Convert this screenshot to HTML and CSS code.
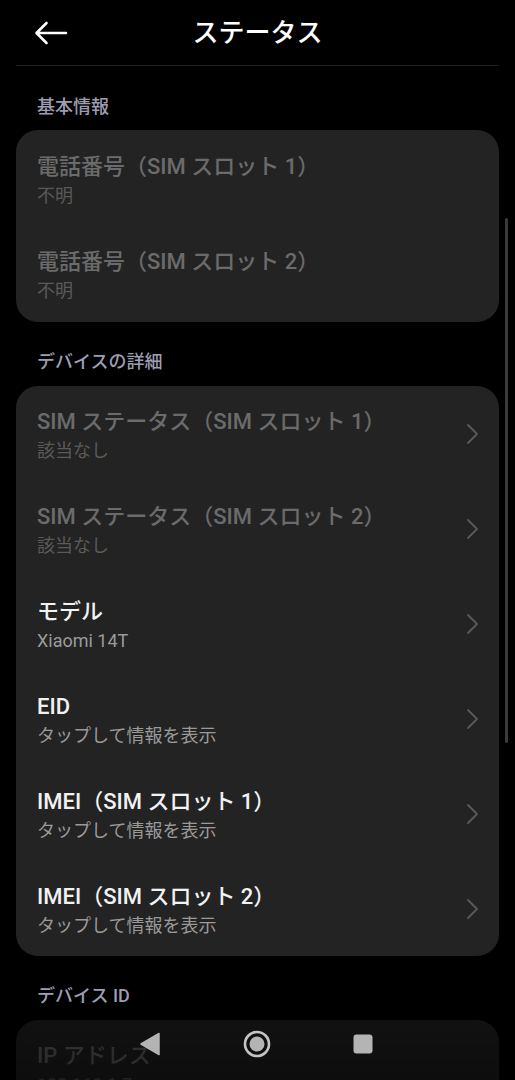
FILE: index.html
```html
<!DOCTYPE html>
<html lang="ja">
  <head>
    <meta charset="utf-8">
    <meta name="viewport" content="width=device-width">
    <title>ステータス</title>
    <link rel="stylesheet" href="styles.css">
  </head>
  <body>
    <header class="topbar">
      <div class="back">
        <svg width="34" height="24" viewBox="0 0 34 24">
          <path d="M32 12H3M12.5 2L2.5 12l10 10" fill="none" stroke="#fff" stroke-width="2.6" stroke-linecap="round" stroke-linejoin="round"/>
        </svg>
      </div>
      <h1 class="title">ステータス</h1>
      <div></div>
    </header>

    <main class="content">
      <h2 class="label">基本情報</h2>
      <section class="card card-basic">
        <div class="row disabled">
          <div class="text">
            <div class="name">電話番号（SIM スロット 1）</div>
            <div class="sub">不明</div>
          </div>
        </div>
        <div class="row disabled">
          <div class="text">
            <div class="name">電話番号（SIM スロット 2）</div>
            <div class="sub">不明</div>
          </div>
        </div>
      </section>

      <h2 class="label">デバイスの詳細</h2>
      <section class="card">
        <div class="row disabled">
          <div class="text">
            <div class="name">SIM ステータス（SIM スロット 1）</div>
            <div class="sub">該当なし</div>
          </div>
          <svg class="chev" width="14" height="22" viewBox="0 0 14 22"><path d="M3 2l9 9-9 9" fill="none" stroke="currentColor" stroke-width="1.8" stroke-linecap="round" stroke-linejoin="round"/></svg>
        </div>
        <div class="row disabled">
          <div class="text">
            <div class="name">SIM ステータス（SIM スロット 2）</div>
            <div class="sub">該当なし</div>
          </div>
          <svg class="chev" width="14" height="22" viewBox="0 0 14 22"><path d="M3 2l9 9-9 9" fill="none" stroke="currentColor" stroke-width="1.8" stroke-linecap="round" stroke-linejoin="round"/></svg>
        </div>
        <div class="row">
          <div class="text">
            <div class="name">モデル</div>
            <div class="sub">Xiaomi 14T</div>
          </div>
          <svg class="chev" width="14" height="22" viewBox="0 0 14 22"><path d="M3 2l9 9-9 9" fill="none" stroke="currentColor" stroke-width="1.8" stroke-linecap="round" stroke-linejoin="round"/></svg>
        </div>
        <div class="row">
          <div class="text">
            <div class="name">EID</div>
            <div class="sub">タップして情報を表示</div>
          </div>
          <svg class="chev" width="14" height="22" viewBox="0 0 14 22"><path d="M3 2l9 9-9 9" fill="none" stroke="currentColor" stroke-width="1.8" stroke-linecap="round" stroke-linejoin="round"/></svg>
        </div>
        <div class="row">
          <div class="text">
            <div class="name">IMEI（SIM スロット 1）</div>
            <div class="sub">タップして情報を表示</div>
          </div>
          <svg class="chev" width="14" height="22" viewBox="0 0 14 22"><path d="M3 2l9 9-9 9" fill="none" stroke="currentColor" stroke-width="1.8" stroke-linecap="round" stroke-linejoin="round"/></svg>
        </div>
        <div class="row">
          <div class="text">
            <div class="name">IMEI（SIM スロット 2）</div>
            <div class="sub">タップして情報を表示</div>
          </div>
          <svg class="chev" width="14" height="22" viewBox="0 0 14 22"><path d="M3 2l9 9-9 9" fill="none" stroke="currentColor" stroke-width="1.8" stroke-linecap="round" stroke-linejoin="round"/></svg>
        </div>
      </section>

      <h2 class="label">デバイス ID</h2>
      <section class="card">
        <div class="row disabled">
          <div class="text">
            <div class="name">IP アドレス</div>
            <div class="sub">192.168.1.7</div>
          </div>
        </div>
      </section>
    </main>

    <div class="scrollbar"></div>

    <nav class="navbar">
      <svg width="22" height="24" viewBox="0 0 22 24"><path d="M20 1.5L2 12l18 10.5z" fill="#b4b4b4" stroke="#b4b4b4" stroke-width="1.5" stroke-linejoin="round"/></svg>
      <svg width="28" height="28" viewBox="0 0 28 28"><circle cx="14" cy="14" r="12" fill="none" stroke="#c4c4c4" stroke-width="2.6"/><circle cx="14" cy="14" r="7.5" fill="#b4b4b4"/></svg>
      <svg width="20" height="20" viewBox="0 0 20 20"><rect x="0.5" y="0.5" width="19" height="19" rx="3" fill="#b4b4b4"/></svg>
    </nav>
  </body>
</html>
```

FILE: styles.css
```css
html, body {
    margin: 0;
    padding: 0;
    height: 100%;
}
body {
    background: #000;
    color: #f2f2f2;
    font-family: Roboto, "Noto Sans CJK JP", sans-serif;
    overflow: hidden;
    position: relative;
}

.topbar {
    display: grid;
    grid-template-columns: 1fr auto 1fr;
    align-items: center;
    height: 65px;
    margin: 0 16px;
    border-bottom: 1px solid #1d1d1d;
}
.back {
    display: flex;
    padding-left: 18px;
    padding-top: 1px;
}
.title {
    margin: 0;
    font-size: 26px;
    font-weight: 500;
    line-height: 34px;
    color: #fff;
}

.content {
    padding: 0 16px;
}
.label {
    margin: 0;
    padding: 29px 21px 11px;
    font-size: 18px;
    font-weight: 500;
    line-height: 24px;
    color: #9d9eb2;
}
.card + .label {
    padding-top: 28px;
    padding-bottom: 12px;
}

.card {
    background: #232323;
    border-radius: 22px;
}
.card-basic {
    padding: 1px 0;
}
.row {
    display: flex;
    align-items: center;
    height: 95px;
    padding: 0 21px;
}
.text {
    flex: 1;
    padding-top: 4px;
}
.name {
    font-size: 22px;
    font-weight: 500;
    line-height: 28px;
    color: #f2f2f2;
}
.sub {
    margin-top: 3px;
    font-size: 18px;
    line-height: 24px;
    color: #9a9a9a;
}
.disabled .name {
    color: #6b6b6b;
}
.disabled .sub {
    color: #5a5a5a;
}
.chev {
    color: #595959;
    margin-right: -1px;
}

.scrollbar {
    position: absolute;
    top: 218px;
    left: 505px;
    width: 3px;
    height: 525px;
    border-radius: 2px;
    background: #3a3a3a;
}

.navbar {
    position: absolute;
    left: 0;
    right: 0;
    bottom: 0;
    height: 68px;
    display: flex;
    align-items: center;
    justify-content: center;
    gap: 82px;
    padding-bottom: 2px;
    padding-right: 3px;
    background: linear-gradient(180deg, rgba(0,0,0,.5), rgba(0,0,0,.62));
}
```
